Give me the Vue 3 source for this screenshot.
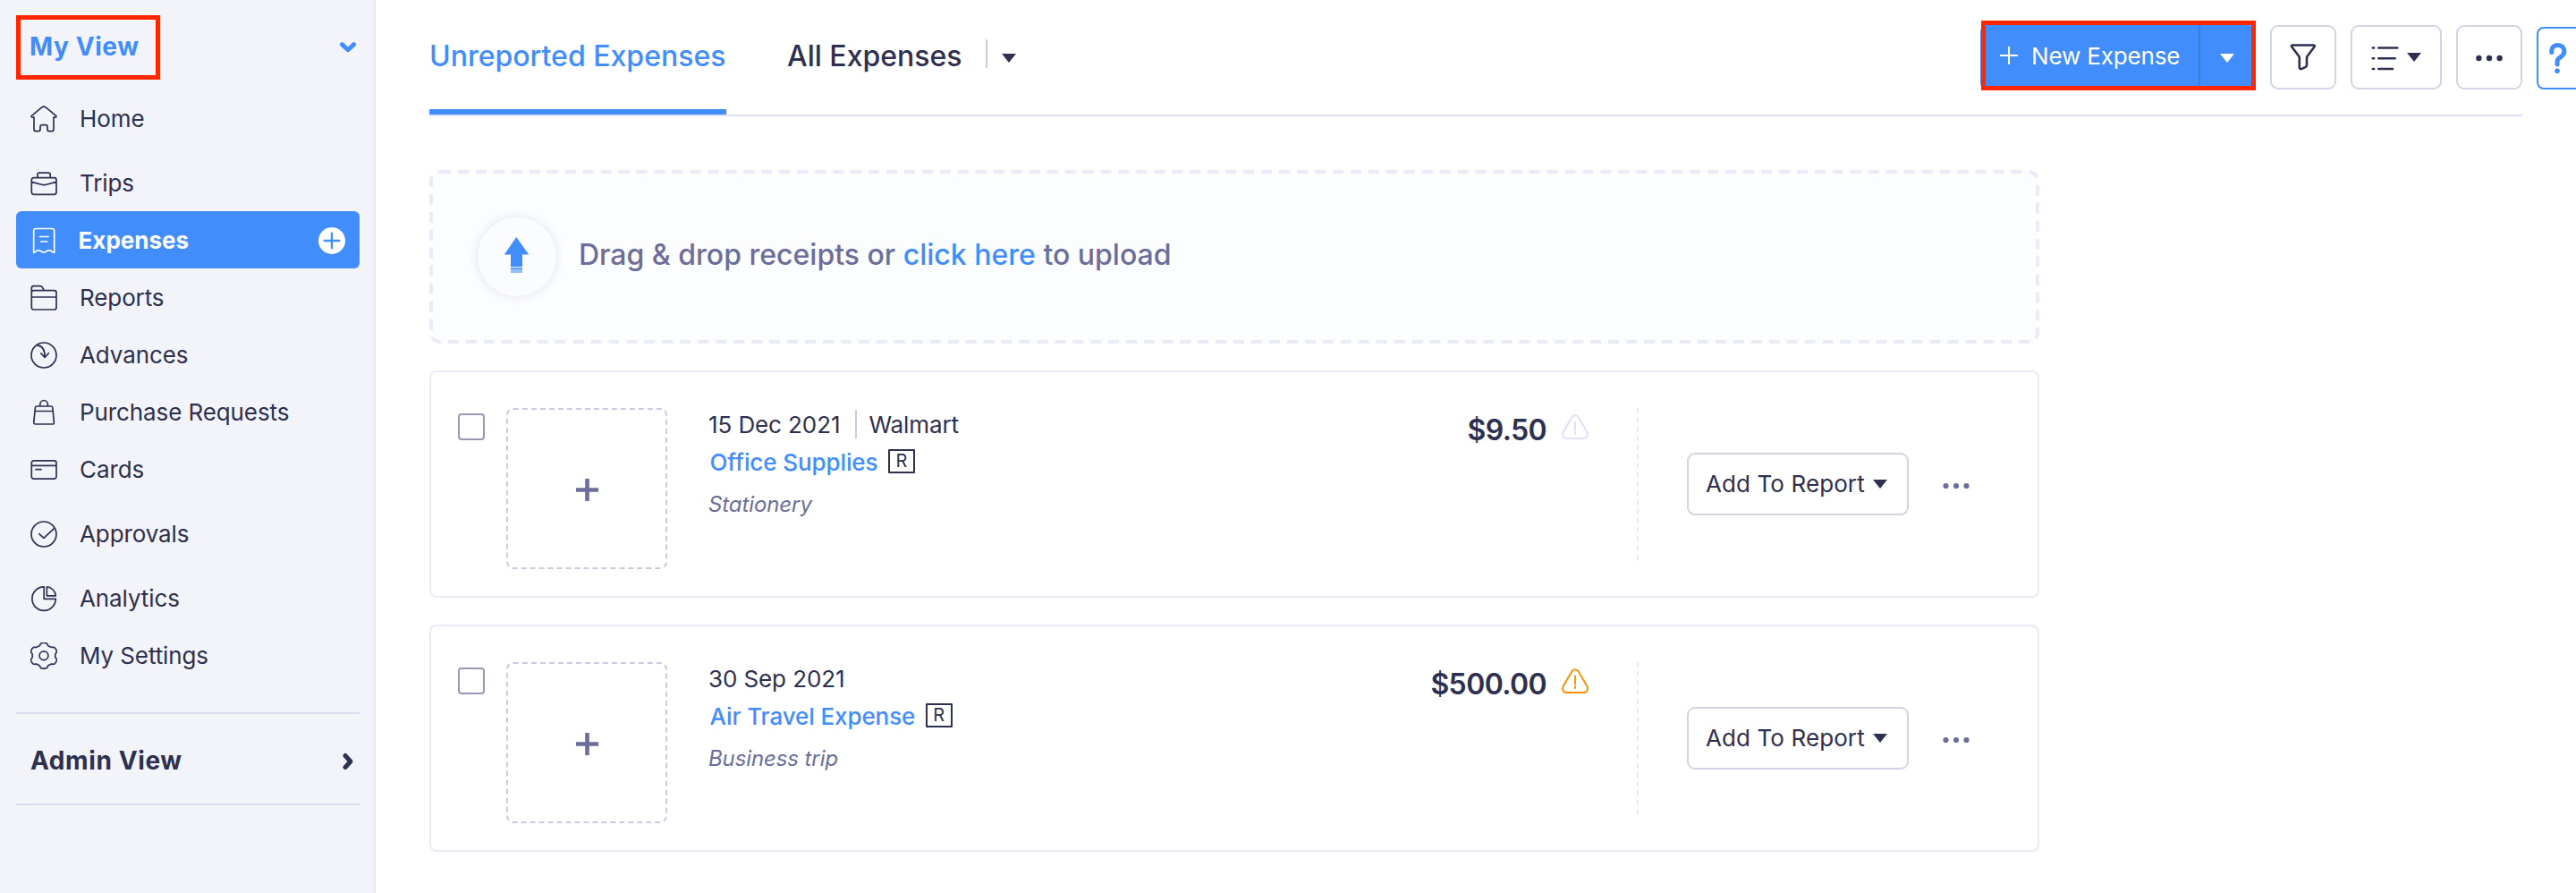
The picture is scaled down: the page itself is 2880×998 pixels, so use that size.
<script setup>
const gear = (() => {
  const pts = []
  for (let i = 0; i < 144; i++) {
    const a = (i / 144) * Math.PI * 2
    const r = 13.1 + 1.3 * Math.tanh(2.2 * Math.cos(6 * (a + Math.PI / 2)) + 0.3)
    pts.push(`${(15 + r * Math.cos(a) * 1.08).toFixed(2)} ${(14.8 + r * Math.sin(a)).toFixed(2)}`)
  }
  return `M${pts.join('L')}Z M19.9 14.8a4.9 4.9 0 1 1-9.8 0a4.9 4.9 0 1 1 9.8 0Z`
})()

const circle = 'M29 15a14 14 0 1 1-28 0a14 14 0 1 1 28 0Z'

const groups = [
  [
    { label: 'Home', icon: 'M4 13.2H2.4C1 13.2.7 11.9 1.7 11.1L12.6 2.2C14 1 16 1 17.4 2.2L28.3 11.1C29.3 11.9 29 13.2 27.6 13.2H26V26.6a2 2 0 0 1-2 2H21a2 2 0 0 1-2-2V23.6a2 2 0 0 0-2-2H13a2 2 0 0 0-2 2V26.6a2 2 0 0 1-2 2H6a2 2 0 0 1-2-2Z' },
  ],
  [
    { label: 'Trips', icon: 'M3.8 8.6H26.5a2.5 2.5 0 0 1 2.5 2.5V24.8a2.5 2.5 0 0 1-2.5 2.5H3.8a2.5 2.5 0 0 1-2.5-2.5V11.1a2.5 2.5 0 0 1 2.5-2.5ZM8 8.6V5.2a2 2 0 0 1 2-2H20.2a2 2 0 0 1 2 2V8.6M1.3 13.4L13.5 16.5Q15.1 16.9 16.7 16.5L29 13.4' },
    { label: 'Expenses', active: true, icon: 'M3.7 28.5V4a2.5 2.5 0 0 1 2.5-2.5H24.2a2.5 2.5 0 0 1 2.5 2.5V28.5L22.2 25.9Q21 25.3 19.8 25.9L16.2 27.7Q15 28.3 13.8 27.7L10.2 25.9Q9 25.3 7.8 25.9ZM10.6 10.5H20M11.5 16H18.7' },
    { label: 'Reports', icon: 'M1.3 8.5V4A2.3 2.3 0 0 1 3.6 1.7H10.4Q12.6 1.7 13.4 3.2L15.3 6.7H26.8A2.3 2.3 0 0 1 29 9V25.7A2.3 2.3 0 0 1 26.8 28H3.6A2.3 2.3 0 0 1 1.3 25.7V8.9A2.2 2.2 0 0 1 3.6 6.7H15.3M1.3 14H29' },
    { label: 'Advances', icon: circle + 'M7.7 3.9C13 4.6 16.4 9 16.1 17.3M11.8 12.9L16.1 17.5L20.3 12.7' },
    { label: 'Purchase Requests', icon: 'M7.3 8H23.1Q24.6 8 24.8 9.5L26.4 25.8Q26.6 28 24.5 28H5.8Q3.6 28 3.8 25.8L5.4 9.5Q5.6 8 7.3 8ZM5.2 13.5H25M10.8 8V5.8a4.3 4.3 0 0 1 8.6 0V8' },
    { label: 'Cards', icon: 'M3.8 4.8H26.5A2.5 2.5 0 0 1 29 7.3V22.7A2.5 2.5 0 0 1 26.5 25.2H3.8A2.5 2.5 0 0 1 1.3 22.7V7.3A2.5 2.5 0 0 1 3.8 4.8ZM1.3 10.4H29M6 14.7H12' },
  ],
  [{ label: 'Approvals', icon: circle + 'M9.7 14.6L15 19.3L26.4 8.7' }],
  [
    { label: 'Analytics', icon: 'M15.2 1.9A13.2 13.2 0 1 0 28.3 15.3H15.2ZM18.4 1.9A10.6 10.6 0 0 1 28.3 11.8H18.4Z' },
    { label: 'My Settings', icon: gear },
  ],
]

const expenses = [
  { date: '15 Dec 2021', merchant: 'Walmart', category: 'Office Supplies', note: 'Stationery', amount: '$9.50', warn: false },
  { date: '30 Sep 2021', merchant: '', category: 'Air Travel Expense', note: 'Business trip', amount: '$500.00', warn: true },
]
</script>

<template>
  <div class="page">
    <aside class="sidebar">
      <div class="view-head">
        <div class="view-title">My View</div>
        <svg class="chev" width="20" height="14" viewBox="0 0 20 14"><path d="M3.5 3.7L10 9.8L16.5 3.7" /></svg>
      </div>
      <nav>
        <div v-for="(group, g) in groups" :key="g" class="group">
          <a v-for="item in group" :key="item.label" class="item" :class="{ active: item.active }">
            <svg class="icon" width="30" height="30" viewBox="0 0 30 30"><path :d="item.icon" /></svg>
            <span class="label">{{ item.label }}</span>
            <svg v-if="item.active" class="add" width="30" height="30" viewBox="0 0 30 30">
              <circle cx="15" cy="15" r="15" /><path d="M6.7 15H23.3M15 6.7V23.3" />
            </svg>
          </a>
        </div>
      </nav>
      <div class="admin">
        <span>Admin View</span>
        <svg class="chev" width="14" height="20" viewBox="0 0 14 20"><path d="M4 3.5L9.9 10L4 16.5" /></svg>
      </div>
    </aside>

    <main>
      <header>
        <div class="tab current">Unreported Expenses</div>
        <div class="tab second">All Expenses</div>
        <i class="tab-sep"></i>
        <i class="tri"></i>
        <div class="tools">
          <div class="new">
            <svg width="20" height="20" viewBox="0 0 20 20"><path d="M0 10H20M10 0V20" /></svg>
            <span>New Expense</span>
            <div class="drop"><i class="tri"></i></div>
            <div class="mark"></div>
          </div>
          <button class="tool square">
            <svg width="30" height="32" viewBox="0 0 30 32"><path d="M3.2 2.5H26.5Q28.5 2.5 27.5 4.3L19.5 15Q19 15.7 19 16.5V24.5Q19 26 17.7 26.8L13.5 28.8Q10.8 29.8 10.8 27V16.5Q10.8 15.7 10.3 15L2.2 4.3Q1.2 2.5 3.2 2.5Z" /></svg>
          </button>
          <button class="tool list">
            <svg width="32" height="28" viewBox="0 0 32 28"><path d="M1.8 2.5H3.1M8.3 2.5H29.3M1.8 14.3H3.1M8.3 14.3H26.6M1.8 26H3.1M8.3 26H24" /></svg>
            <i class="tri"></i>
          </button>
          <button class="tool square">
            <svg class="dots" width="30" height="8" viewBox="0 0 30 8"><circle cx="3.4" cy="4" r="3.2" /><circle cx="15" cy="4" r="3.2" /><circle cx="26.6" cy="4" r="3.2" /></svg>
          </button>
        </div>
      </header>

      <section class="dropzone">
        <div class="up">
          <svg width="30" height="42" viewBox="0 0 30 42">
            <path d="M14.3 1L28.2 20.500H21V34H8V20.500H.8Z" />
            <path d="M8 34.500H21V36H8ZM8 37.500H21V41H8Z" opacity=".55" /><path d="M8 36H21V37.300H8Z" />
          </svg>
        </div>
        <p>Drag &amp; drop receipts or <a>click here</a> to upload</p>
      </section>

      <article v-for="e in expenses" :key="e.category" class="card">
        <i class="check"></i>
        <div class="thumb"><svg width="25" height="25" viewBox="0 0 25 25"><path d="M0 12.500H25M12.500 0V25" /></svg></div>
        <div class="details">
          <div class="line">{{ e.date }}<template v-if="e.merchant"><i class="sep"></i>{{ e.merchant }}</template></div>
          <div class="line cat"><a>{{ e.category }}</a><span class="badge">R</span></div>
          <div class="note">{{ e.note }}</div>
        </div>
        <div class="amount">
          <span>{{ e.amount }}</span>
          <svg :class="{ warn: e.warn }" width="30" height="30" viewBox="0 0 30 30">
            <path d="M11.3 3.6C13 .5 17 .5 18.7 3.6L28 19.3C30.3 23.4 28.2 27.1 23.8 27.1H6.2C1.8 27.1 -.3 23.4 2 19.3ZM15 8.500V17.800M15 20.300V22" />
          </svg>
        </div>
        <i class="split"></i>
        <button class="report">Add To Report<i class="tri"></i></button>
        <svg class="dots more" width="30" height="8" viewBox="0 0 30 8"><circle cx="3.5" cy="4" r="3.1" /><circle cx="15" cy="4" r="3.1" /><circle cx="26.5" cy="4" r="3.1" /></svg>
      </article>
    </main>

    <div class="help">
      <svg width="22" height="36" viewBox="0 0 22 36"><path d="M3.7 11.500V10C3.700 5.800 6.600 3.500 10.800 3.500C15 3.500 17.800 6 17.800 10.500C17.800 17 10 16.500 10 21.500V25" /><circle cx="10" cy="32.300" r="2.800" /></svg>
    </div>
  </div>
</template>

<style>
body { background: #fff; overflow: hidden; }
</style>

<style scoped>
*, *::before { box-sizing: border-box; }
.page {
  position: relative;
  display: flex;
  width: 2880px;
  height: 998px;
  overflow: hidden;
  font-family: Inter, sans-serif;
  font-size: 26px;
  color: #2d3051;
  white-space: nowrap;
}
svg { display: block; flex: none; fill: none; }
button { font: inherit; color: inherit; background: #fff; border: 2px solid #d5d2e6; border-radius: 9px; }
.tri { flex: none; width: 0; height: 0; border: solid transparent; border-width: 10px 8px 0; border-top-color: currentColor; }

.sidebar { flex: none; width: 420px; padding: 17px 16px 0 18px; background: #f3f4f9; border-right: 2px solid #e9e9f7; }
.view-head { display: flex; justify-content: space-between; height: 83px; padding-right: 3px; color: #408dfb; }
.view-title {
  width: 161px;
  height: 72px;
  padding: 13px 0 0 10px;
  border: 5px solid #ff2600;
  font-size: 28px;
  font-weight: 700;
  line-height: 34px;
  letter-spacing: .6px;
}
.chev { stroke: currentColor; stroke-width: 5; stroke-linecap: round; stroke-linejoin: round; }
.view-head .chev { margin-top: 29px; }
.group { margin-bottom: 8px; }
.item { display: flex; height: 64px; padding: 0 16px; border-radius: 6px; letter-spacing: -.1px; }
.icon { margin-top: 18px; stroke: currentColor; stroke-width: 1.7; stroke-linejoin: round; stroke-linecap: round; }
.label { flex: 1; margin-left: 25px; line-height: 65px; }
.active { background: #408dfb; color: #fff; font-weight: 700; letter-spacing: 0; }
.active .label { margin-left: 23.5px; }
.add { margin-top: 18px; }
.add circle { fill: #fff; }
.add path { stroke: #408dfb; stroke-width: 2.4; stroke-linecap: round; }
.admin {
  display: flex;
  justify-content: space-between;
  height: 104px;
  margin-top: 32px;
  padding: 0 6px 0 16px;
  border: solid #dcdcf0;
  border-width: 2px 0;
  font-size: 28px;
  font-weight: 700;
  line-height: 104px;
  letter-spacing: .6px;
}
.admin .chev { margin-top: 43px; }

main { flex: 1; padding: 0 60px; }
header { display: flex; width: 2340px; height: 130px; border-bottom: 2px solid #dcdff1; }
.tab { height: 128px; font-size: 32px; font-weight: 500; line-height: 125px; }
.current { width: 332px; color: #408dfb; border-bottom: 6px solid #408dfb; }
.second { margin-left: 68px; }
.tab-sep { width: 2px; height: 32px; margin: 44px 16px 0 26px; background: #ccc9e0; }
header > .tri { margin-top: 60px; }
.tools { display: flex; gap: 16px; margin: 28px 0 0 auto; height: 72px; }
.new {
  position: relative;
  display: flex;
  width: 308px;
  padding-left: 22px;
  background: #408dfb;
  border-radius: 7px;
  color: #fff;
  line-height: 69px;
}
.new > svg { margin-top: 24px; stroke: #fff; stroke-width: 2; }
.new > span { margin-left: 15px; letter-spacing: -.15px; }
.drop { display: flex; width: 64px; margin-left: auto; padding: 32px 0 0 22px; border-left: 2px solid #3a7cdb; }
.mark { position: absolute; left: 1px; top: -5px; width: 307px; height: 78px; border: 5px solid #ff2600; }
.tool { display: flex; align-items: center; justify-content: center; padding: 0; }
.tool svg { stroke: currentColor; stroke-width: 2.6; stroke-linejoin: round; stroke-linecap: round; }
.square { width: 74px; }
.list { width: 102px; gap: 8px; }
.list svg { margin-top: 2px; }
.tool .dots, .dots { stroke: none; fill: currentColor; }
.tool .dots { margin-top: 2px; }

.dropzone {
  position: relative;
  display: flex;
  align-items: center;
  width: 1800px;
  height: 194px;
  margin-top: 60px;
  padding-left: 54px;
  background: #fcfdff;
  border-radius: 12px;
}
.dropzone::before {
  content: '';
  position: absolute;
  left: 0;
  top: 0;
  width: 50%;
  height: 50%;
  border: 2px dashed #ebebf7;
  border-radius: 6px;
  transform: scale(2);
  transform-origin: 0 0;
}
.up {
  display: flex;
  align-items: center;
  justify-content: center;
  width: 88px;
  height: 88px;
  border-radius: 50%;
  box-shadow: 0 0 10px 2px #e9eaf2;
  background: #fbfcff;
}
.up svg { fill: #408dfb; margin-top: -5px; }
.dropzone p { margin: 0 0 5px 25px; font-size: 32px; font-weight: 500; line-height: 39px; color: #6b6e9b; }
.dropzone a { color: #408dfb; }

.card { display: flex; width: 1800px; height: 254px; margin-top: 30px; padding: 40px 76px 0 30px; border: 2px solid #ebebf8; border-radius: 8px; }
.check { width: 30px; height: 30px; margin-top: 6px; border: 2px solid #9799b4; border-radius: 4px; }
.thumb {
  display: flex;
  align-items: center;
  justify-content: center;
  width: 180px;
  height: 180px;
  margin-left: 24px;
  border: 2px dashed #ccc9e0;
  border-radius: 8px;
}
.thumb svg { margin-top: 3px; stroke: #6b6e9b; stroke-width: 4.6; }
.details { flex: 1; padding: 3px 0 0 46px; }
.line { display: flex; height: 31px; line-height: 31px; letter-spacing: -.1px; }
.sep { width: 2px; height: 32px; margin: -1px 13px 0 17px; background: #c9cbe2; }
.cat { margin: 11px 0 17px 1.5px; }
.cat a { color: #408dfb; font-weight: 500; }
.badge { width: 30px; height: 27px; margin: 1px 0 0 11.5px; border: 2px solid #2d3051; border-radius: 1px; font-size: 20px; line-height: 23px; text-align: center; }
.note { font-size: 24px; font-style: italic; line-height: 29px; letter-spacing: -.1px; color: #6b6e9b; }
.amount { display: flex; gap: 17px; padding-top: 5px; font-size: 32px; font-weight: 600; line-height: 39px; letter-spacing: -.6px; }
.amount svg { margin-top: 2px; stroke: #dfe0f6; stroke-width: 2; stroke-linecap: round; }
.amount .warn { stroke: #ff8f0b; }
.split { height: 170px; margin-left: 54px; border-left: 2px dashed #e9e9ee; }
.report {
  display: flex;
  width: 248px;
  height: 70px;
  margin: 50px 0 0 54px;
  padding: 0 0 0 19px;
  line-height: 65px;
  letter-spacing: .1px;
}
.report .tri { margin: 28px 0 0 9px; }
.more { margin: 83px 0 0 38px; color: #6b6e9b; }

.help {
  position: absolute;
  left: 2836px;
  top: 30px;
  width: 60px;
  height: 70px;
  padding: 15px 0 0 10.5px;
  border: 2px solid #408dfb;
  border-radius: 8px;
}
.help path { stroke: #408dfb; stroke-width: 5; stroke-linecap: round; }
.help circle { fill: #408dfb; }
</style>
